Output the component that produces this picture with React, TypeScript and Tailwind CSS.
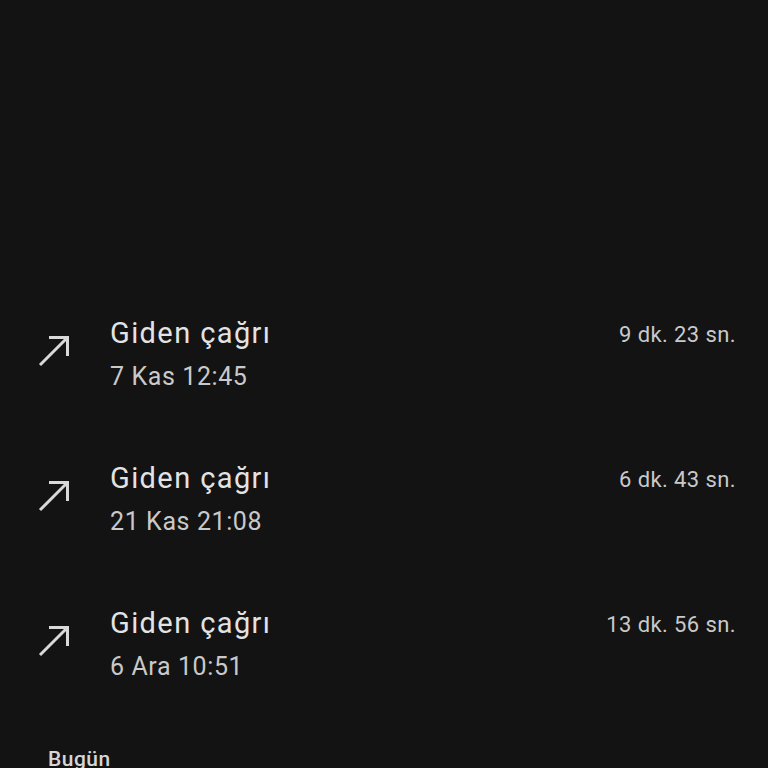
import React from 'react';

type Call = { date: string; duration: string };

const CALLS: Call[] = [
  { date: '7 Kas 12:45', duration: '9 dk. 23 sn.' },
  { date: '21 Kas 21:08', duration: '6 dk. 43 sn.' },
  { date: '6 Ara 10:51', duration: '13 dk. 56 sn.' },
];

function OutgoingIcon() {
  return (
    <svg width="32" height="32" viewBox="0 0 32 32" fill="none" stroke="#d9d9d9" strokeWidth="3">
      <path d="M11 2.5H29.5V21" strokeLinejoin="miter" />
      <path d="M29.5 2.5L2 30" />
    </svg>
  );
}

function CallRow({ call }: { call: Call }) {
  return (
    <div className="h-[145px] shrink-0 flex items-center pl-[38px] pr-[32px]">
      <div className="w-[72px] shrink-0 -mt-[6px]">
        <OutgoingIcon />
      </div>
      <div className="flex-1 flex flex-col">
        <div className="flex items-baseline justify-between">
          <span className="text-[29px] leading-[36px] tracking-[1.4px] text-[#e3e3e3]">Giden çağrı</span>
          <span className="text-[22px] leading-[28px] tracking-[0.4px] text-[#c9c9c9] -translate-y-[1px]">{call.duration}</span>
        </div>
        <span className="mt-[10px] text-[25px] leading-[32px] tracking-[0.6px] text-[#c9c9c9]">{call.date}</span>
      </div>
    </div>
  );
}

export default function App() {
  return (
    <div
      className="w-full h-[768px] overflow-hidden bg-[#131313] flex flex-col pt-[281px]"
      style={{ fontFamily: 'Roboto, "Open Sans", sans-serif' }}
    >
      {CALLS.map((c) => (
        <CallRow key={c.date} call={c} />
      ))}
      <div className="shrink-0 mt-[29px] pl-[48px] text-[21px] leading-[28px] font-medium tracking-[0.5px] text-[#d6d6d6]">Bugün</div>
    </div>
  );
}
